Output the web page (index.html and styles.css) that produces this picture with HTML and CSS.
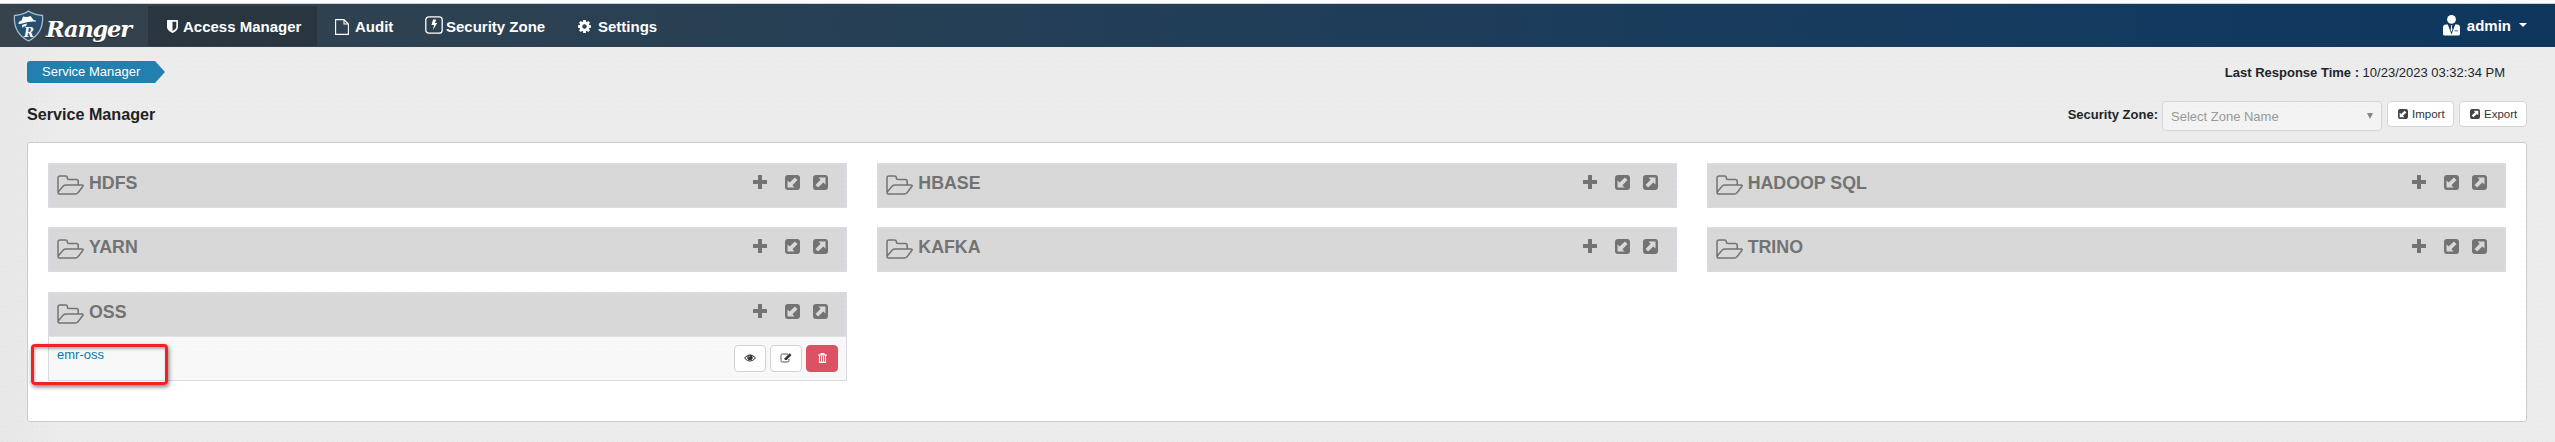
FILE: index.html
```html
<!DOCTYPE html>
<html lang="en">
<head>
<meta charset="utf-8">
<title>Ranger</title>
<link rel="stylesheet" href="styles.css">
</head>
<body>
<svg class="defs" aria-hidden="true">
  <symbol id="folder" viewBox="0 0 27 20"><path d="M1 17.5V3Q1 1 3 1h5.500Q10.300 1 10.300 2.500V3Q10.300 4.500 12 4.500h7.500Q21.200 4.500 21.200 6.500V9.800M3 19Q1 19 1 17.200L6.300 11Q7.300 9.900 9 9.900h16Q26.800 10 25.800 11.500L21 17.800Q20 19 18.500 19Z" fill="none" stroke="#737373" stroke-width="1.500"/></symbol>
  <symbol id="plus" viewBox="0 0 14 14"><path d="M5.500 0h3q.5 0 .5.500V5h4.500q.5 0 .5.500v3q0 .5-.5.500H9v4.500q0 .5-.5.500h-3q-.5 0-.5-.5V9H.5Q0 9 0 8.500v-3Q0 5 .5 5H5V.5Q5 0 5.500 0z"/></symbol>
  <symbol id="export" viewBox="0 0 15 15"><path fill-rule="evenodd" d="M3 0h9a3 3 0 0 1 3 3v9a3 3 0 0 1-3 3H3a3 3 0 0 1-3-3V3a3 3 0 0 1 3-3zM5.500 2.500L7.600 4.700L2.500 9.900L5.100 12.500L10.300 7.400L12.500 9.500V2.500z"/></symbol>
  <symbol id="import" viewBox="0 0 15 15"><use href="#export" transform="rotate(180 7.500 7.500)"/></symbol>
</svg>
<header class="nav">
  <a class="brand">
    <svg width="31" height="32" viewBox="0 0 31 32"><path d="M15.500 1Q20 4.500 29.500 5.500Q31 23 15.500 31Q0 23 1.500 5.500Q11 4.500 15.500 1Z" fill="#27506f" stroke="#a4bccd" stroke-width="1.300"/><path d="M5.500 14Q5 11.500 8.500 10.500L10 6.500Q14 7.500 17.500 6L20.500 10Q23.500 10 23 11.500Q15 11 11 13Q8 14 5.500 14ZM9 15l5-1.500-1 3-2-.3L9.500 18z" fill="#fff"/><text x="11" y="26.500" class="shield-letter">R</text></svg>
    <span class="wordmark">Ranger</span>
  </a>
  <a class="item active"><svg width="11" height="13" viewBox="0 0 11 13"><path fill-rule="evenodd" d="M.5 0h10q.5 0 .5.500V7q0 3.500-5.500 6Q0 10.500 0 7V.5Q0 0 .5 0zM5.500 1.700v9.400Q9.300 9 9.300 7V1.700z" fill="#fff"/></svg><span>Access Manager</span></a>
  <a class="item audit"><svg width="14" height="16" viewBox="0 0 14 16"><path d="M.6.6H9L13.400 5V15.400H.6ZM9 .6V5H13.400" fill="none" stroke="#fff" stroke-width="1.100"/></svg><span>Audit</span></a>
  <a class="item zone"><svg width="18" height="18" viewBox="0 0 18 18"><rect x=".8" y=".8" width="16.400" height="16.400" rx="3" fill="none" stroke="#fff" stroke-width="1.300"/><path d="M8 3.500h3.200L10 7h2.200L8 14l1-5H6.500z" fill="#fff"/></svg><span>Security Zone</span></a>
  <a class="item settings"><svg width="13" height="13" viewBox="-6.500 -6.500 13 13"><g fill="#fff"><path id="tooth" d="M-1.300-6.500h2.600L1.700-3h-3.400z"/><use href="#tooth" transform="rotate(45)"/><use href="#tooth" transform="rotate(90)"/><use href="#tooth" transform="rotate(135)"/><use href="#tooth" transform="rotate(180)"/><use href="#tooth" transform="rotate(225)"/><use href="#tooth" transform="rotate(270)"/><use href="#tooth" transform="rotate(315)"/></g><circle r="3.600" fill="none" stroke="#fff" stroke-width="2.700"/></svg><span>Settings</span></a>
  <a class="user"><svg width="17" height="21" viewBox="0 0 17 21"><g fill="#fff"><circle cx="8.500" cy="4.400" r="4.400"/><path fill-rule="evenodd" d="M3 9.500h1.800l3.700 10 3.700-10H14q3 0 3 3v6.500q0 1.500-2 1.500H2q-2 0-2-1.500v-6.500Q0 9.500 3 9.500zM11.500 15.500v.8h3.500v-.8z"/><path d="M7.600 10.200h1.800l-.5 1.500.5 3.300-.9 2-.9-2 .5-3.300z"/></g></svg><span>admin</span><i class="caret"></i></a>
</header>
<main>
  <div class="crumbs"><a class="crumb">Service Manager</a><div class="time"><b>Last Response Time :</b> 10/23/2023 03:32:34 PM</div></div>
  <div class="toolbar">
    <h1>Service Manager</h1>
    <label>Security Zone:</label>
    <div class="select"><span>Select Zone Name</span><i></i></div>
    <button class="btn import"><svg width="10" height="10"><use href="#import"/></svg>Import</button>
    <button class="btn export"><svg width="10" height="10"><use href="#export"/></svg>Export</button>
  </div>
  <section class="panel">
    <article class="service"><header><svg class="folder"><use href="#folder"/></svg><h2>HDFS</h2><svg class="plus"><use href="#plus"/></svg><svg class="arrow"><use href="#import"/></svg><svg class="arrow"><use href="#export"/></svg></header></article>
    <article class="service"><header><svg class="folder"><use href="#folder"/></svg><h2>HBASE</h2><svg class="plus"><use href="#plus"/></svg><svg class="arrow"><use href="#import"/></svg><svg class="arrow"><use href="#export"/></svg></header></article>
    <article class="service"><header><svg class="folder"><use href="#folder"/></svg><h2>HADOOP SQL</h2><svg class="plus"><use href="#plus"/></svg><svg class="arrow"><use href="#import"/></svg><svg class="arrow"><use href="#export"/></svg></header></article>
    <article class="service"><header><svg class="folder"><use href="#folder"/></svg><h2>YARN</h2><svg class="plus"><use href="#plus"/></svg><svg class="arrow"><use href="#import"/></svg><svg class="arrow"><use href="#export"/></svg></header></article>
    <article class="service"><header><svg class="folder"><use href="#folder"/></svg><h2>KAFKA</h2><svg class="plus"><use href="#plus"/></svg><svg class="arrow"><use href="#import"/></svg><svg class="arrow"><use href="#export"/></svg></header></article>
    <article class="service"><header><svg class="folder"><use href="#folder"/></svg><h2>TRINO</h2><svg class="plus"><use href="#plus"/></svg><svg class="arrow"><use href="#import"/></svg><svg class="arrow"><use href="#export"/></svg></header></article>
    <article class="service"><header><svg class="folder"><use href="#folder"/></svg><h2>OSS</h2><svg class="plus"><use href="#plus"/></svg><svg class="arrow"><use href="#import"/></svg><svg class="arrow"><use href="#export"/></svg></header>
      <div class="entry"><a>emr-oss</a>
        <button class="mini"><svg width="12" height="8" viewBox="0 0 12 8"><path d="M.5 4Q6-2.300 11.500 4Q6 10.300.5 4Z" fill="none" stroke="#333"/><circle cx="6" cy="3.600" r="2.700" fill="#333"/><path d="M4.600 3.500Q4.600 2.200 6 2.200" fill="none" stroke="#fff" stroke-width=".6"/></svg></button>
        <button class="mini"><svg width="12" height="10" viewBox="0 0 12 10"><path d="M8 1H2.500Q1 1 1 2.500v5Q1 9 2.500 9H7.500Q9 9 9 7.500V6" fill="none" stroke="#555"/><path d="M9.600.2l1.900 1.700L6.700 7H4.700V5.200z" fill="#333"/></svg></button>
        <button class="mini danger"><svg width="9" height="10" viewBox="0 0 9 10"><path d="M0 2h9M3 1.800V.6h3v1.200M1.500 2v7.400h6V2M3.500 3v6M5.500 3v6" fill="none" stroke="#fff" stroke-width="1.100"/></svg></button>
      </div>
    </article>
  </section>
</main>
<div class="highlight"></div>
</body>
</html>
```

FILE: styles.css
```css
* { box-sizing: border-box; }
body {
  margin: 0;
  height: 442px;
  overflow: hidden;
  font: 13px/20px "Liberation Sans", Arial, sans-serif;
  color: #212529;
  background: linear-gradient(90deg, #e7e7e7, #ececec 60px, #ececec);
}
/* fine dotted paper grain laid over the whole page */
body::after {
  content: "";
  position: absolute;
  inset: 4px 0 0;
  pointer-events: none;
  background: radial-gradient(circle, rgba(0,0,0,.025) .7px, transparent 1px) 0 0 / 5px 5px;
}
.defs { position: absolute; width: 0; height: 0; }
.nav {
  display: flex;
  height: 47px;
  border-top: 3px solid #fcfcfc;
  box-shadow: inset 0 1px #d0d3d6;
  background: linear-gradient(90deg, #36424c 0, #2c4152 500px, #123a60 85%, #0f365c);
  color: #fff;
  font-weight: bold;
  font-size: 15px;
}
.brand { display: flex; width: 148px; padding: 7px 0 0 13px; }
.shield-letter { font: italic bold 12px "DejaVu Serif", serif; fill: #fff; }
.wordmark { margin: 8px 0 0 2px; font: italic bold 22.500px/22px "DejaVu Serif", serif; letter-spacing: -1.200px; text-shadow: 0 1px 1px rgba(0,0,0,.4); }
.item { display: flex; height: 40px; margin-top: 3px; padding-top: 11px; white-space: nowrap; }
.item svg { flex: none; margin-top: 3px; }
.active { width: 169px; padding-left: 19px; background: #293640; }
.active span { margin-left: 5px; }
.audit { width: 108px; padding-left: 18px; }
.audit svg { margin-top: 2px; }
.audit span { margin-left: 6px; }
.zone { width: 153px; }
.zone svg { margin-top: -1px; }
.zone span { margin-left: 3px; }
.settings span { margin-left: 7px; }
.user { display: flex; margin: 12px 28px 0 auto; }
.user span { margin: 1px 8px 0 7px; }
.caret { margin-top: 8px; width: 8px; height: 4px; background: #fff; clip-path: polygon(0 0, 100% 0, 50% 100%); }
main { padding: 0 28px 0 27px; }
.crumbs { display: flex; justify-content: space-between; height: 54px; padding-top: 14px; }
.crumb { width: 138px; height: 22px; padding-left: 15px; border-radius: 3px 0 0 3px; background: #2180ae; color: #fff; line-height: 21px; clip-path: polygon(0 0, 128px 0, 100% 50%, 128px 100%, 0 100%); }
.time { padding: 2px 22px 0 0; }
.toolbar { display: flex; height: 41px; }
h1 { margin: 3px auto 0 0; font-size: 16.150px; line-height: 20px; color: #222; }
.toolbar label { margin: 4px 4px 0 0; font-weight: bold; }
.select { display: flex; justify-content: space-between; width: 220px; height: 30px; padding: 5px 8px; border: 1px solid #d6d6d6; border-radius: 4px; background: #f3f3f3; color: #999; }
.select i { width: 6px; height: 6px; margin-top: 6px; background: #888; clip-path: polygon(0 0, 100% 0, 50% 100%); }
.btn { display: flex; align-items: center; height: 26px; padding: 0 0 0 10px; border: 1px solid #d6d6d6; border-radius: 4px; background: #fff; font: 11.500px/20px "Liberation Sans", Arial, sans-serif; color: #333; fill: #444; }
.import { width: 67px; margin: 0 5px; }
.export { width: 68px; }
.btn svg { margin-right: 4px; }
.panel { display: grid; grid-template-columns: repeat(3, 1fr); gap: 19.900px 30px; align-content: start; height: 280px; padding: 20px; border: 1px solid #ccc; border-radius: 3px; background: #fff; }
.service { border: 1px solid #d9dce3; background: #d8d8d8; }
.service header { display: flex; height: 42.600px; padding: 11px 18px 0 8px; fill: #737373; }
.folder { width: 27px; height: 20px; flex: none; margin-top: -.3px; }
h2 { margin: -3px auto 0 5px; font-size: 17.800px; line-height: 22px; color: #737373; }
.plus { width: 14px; height: 14px; margin-right: 18px; }
.arrow { width: 15px; height: 15px; }
.arrow + .arrow { margin-left: 13px; }
.entry { display: flex; gap: 4px; height: 44px; padding: 8px 8px 0; background: #f8f8f8; border-top: 1px solid #e2e4e9; }
.entry a { margin: 0 auto 0 0; color: #0e76a8; }
.mini { display: flex; align-items: center; justify-content: center; width: 32px; height: 27px; padding: 0; border: 1px solid #d3d3d3; border-radius: 4px; background: #fff; }
.danger { border-color: #dc5265; background: #dc5265; }
.highlight { position: absolute; left: 31px; top: 344px; width: 137px; height: 41px; border: 3px solid #f72020; border-radius: 4px; box-shadow: 1px 2px 4px rgba(0,0,0,.5), inset 1px 2px 3px rgba(0,0,0,.3); }
```
